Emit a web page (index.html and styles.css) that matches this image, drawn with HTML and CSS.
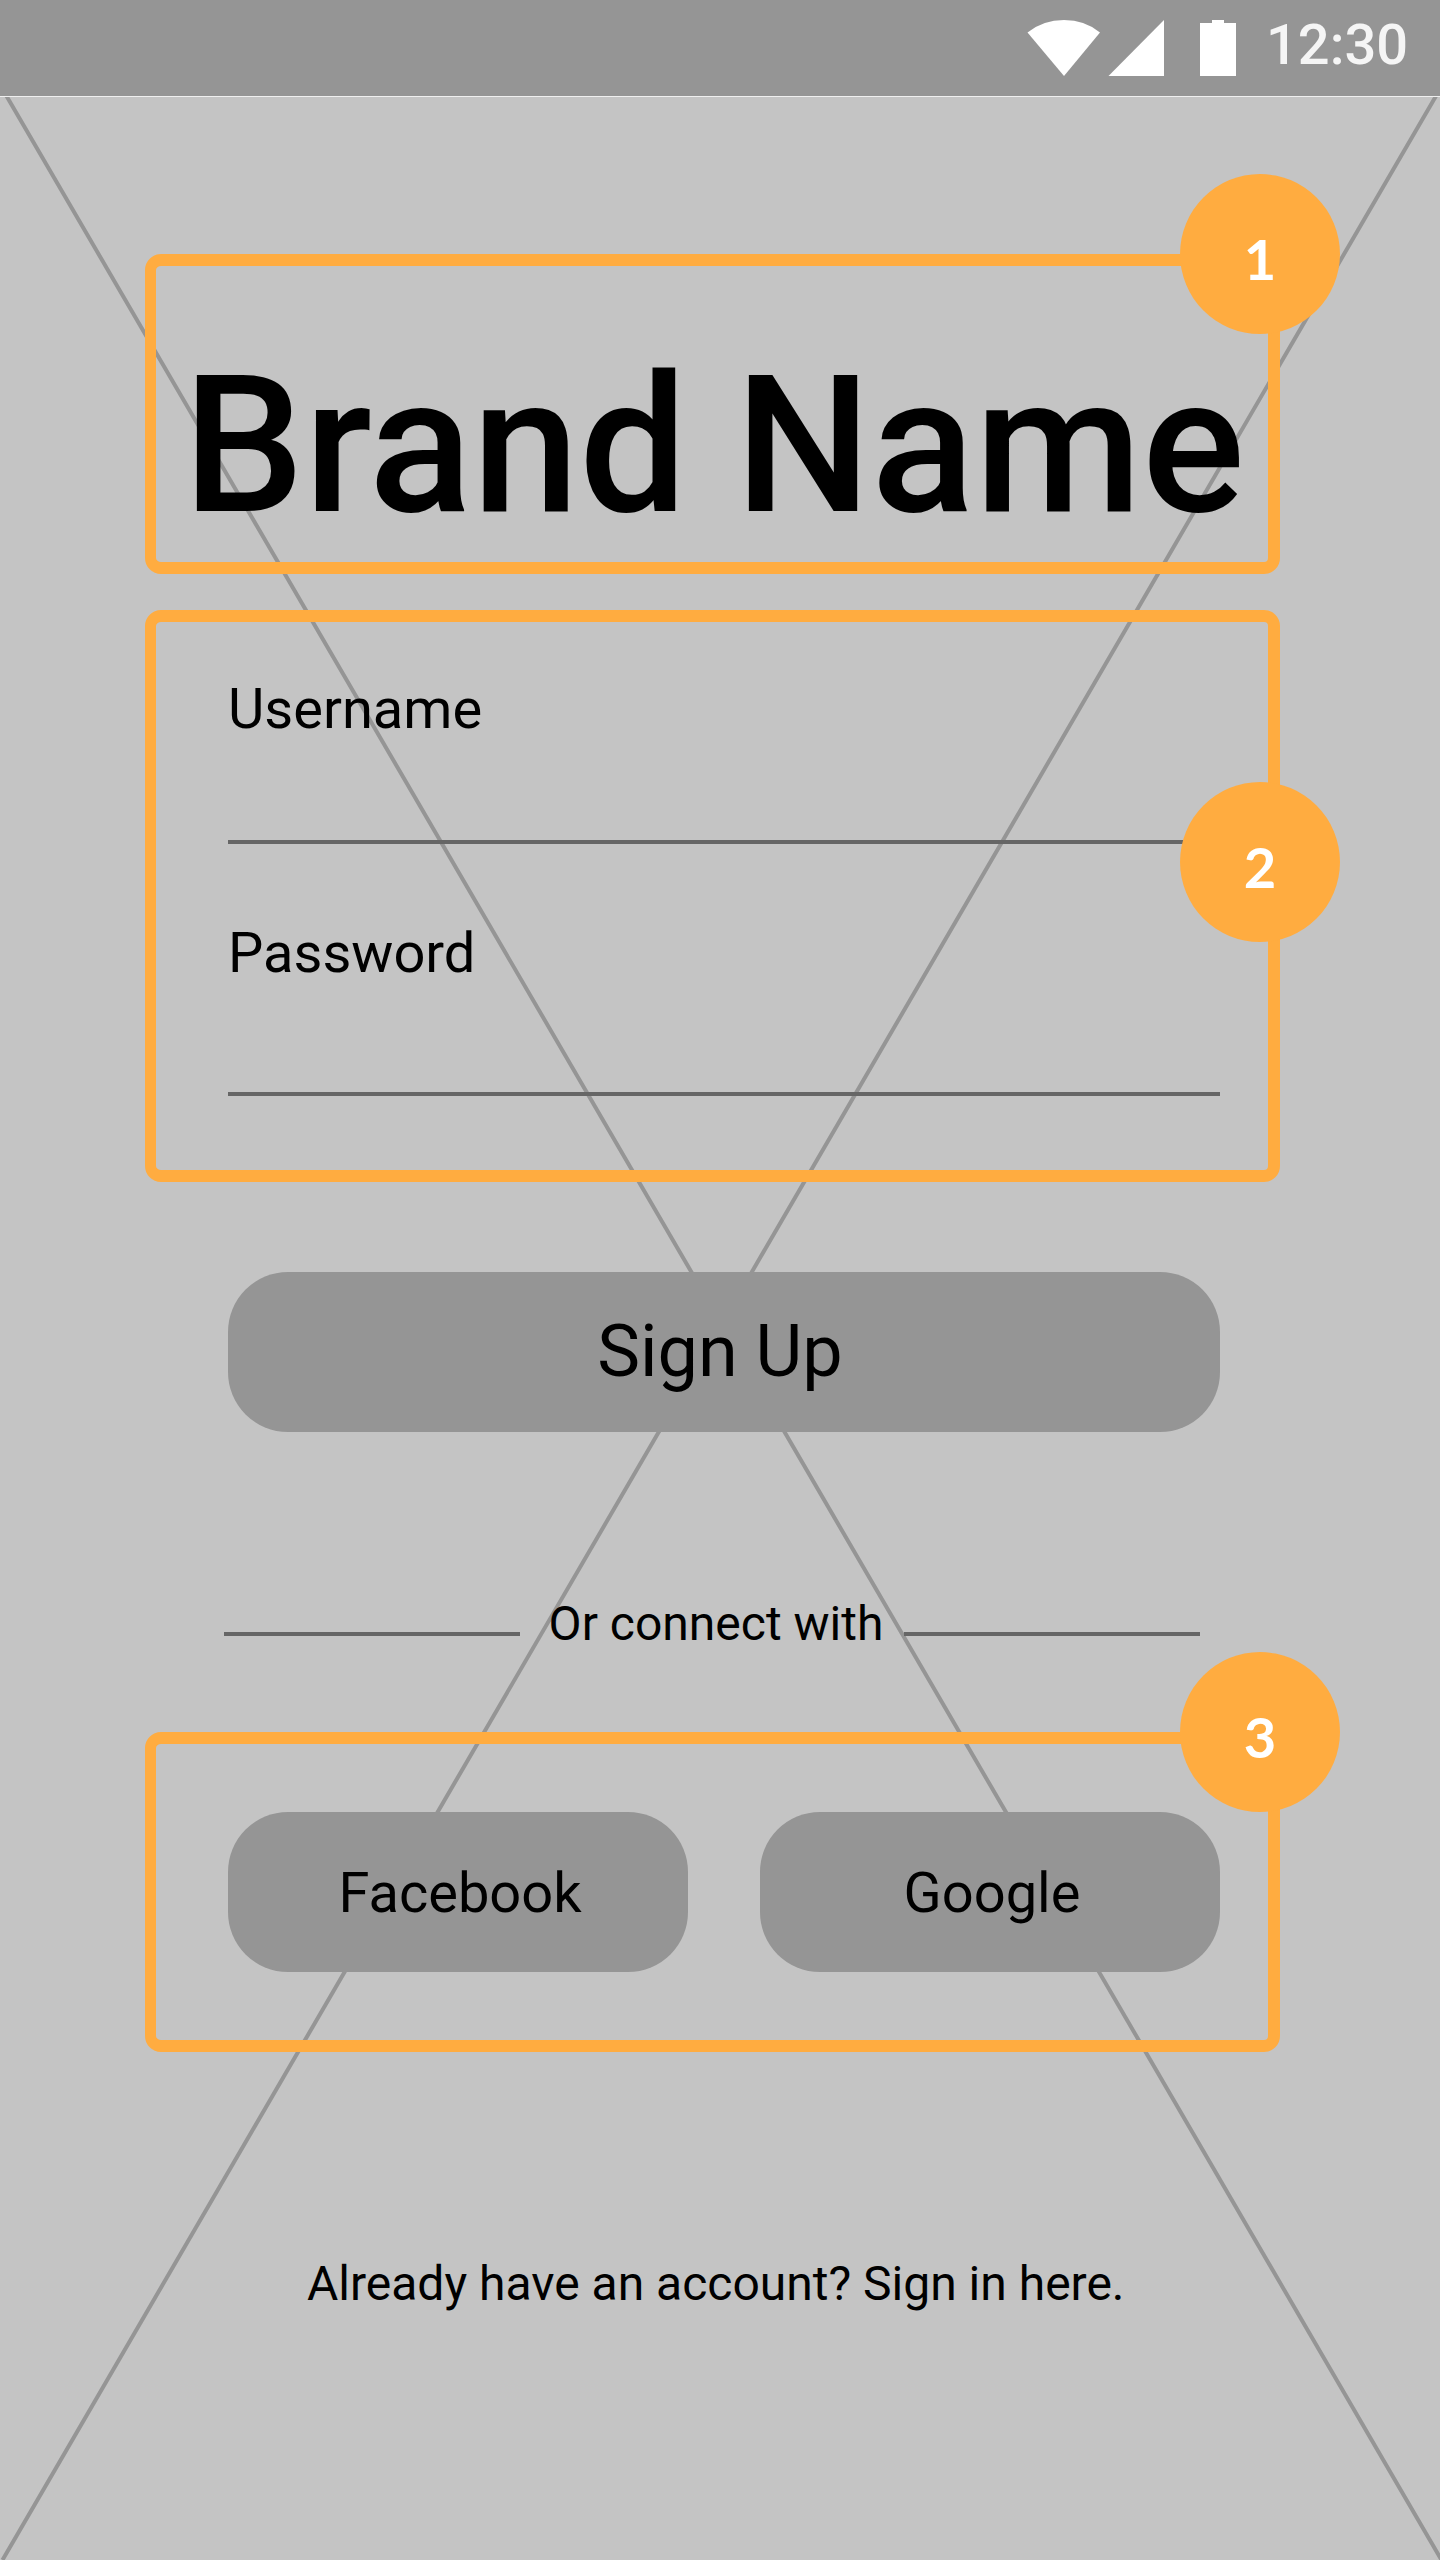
FILE: index.html
```html
<!DOCTYPE html>
<html lang="en">
<head>
<meta charset="utf-8">
<title>Sign Up</title>
<link rel="stylesheet" href="styles.css">
</head>
<body>
<div class="screen">
  <svg class="placeholder" viewBox="0 0 1440 2463" aria-hidden="true">
    <path d="M6.5 -1L1441.5 2463M1436 -1L2.5 2463"/>
  </svg>
  <header class="status">
    <svg class="status-icons" viewBox="0 0 210 56" aria-hidden="true">
      <path d="M0.500 12.5Q16 0 37 0T73 12.5L37 56z"/>
      <path d="M81.5 56L137 0V56z"/>
      <path d="M173 3H185V0H197V3H209V56H173z"/>
    </svg>
    <span class="time">12:30</span>
  </header>
  <main class="content">
    <section class="frame frame-brand">
      <h1 class="brand">Brand Name</h1>
      <span class="badge badge-corner">1</span>
    </section>
    <section class="frame frame-form">
      <div class="field">Username</div>
      <div class="field field-password">Password</div>
      <span class="badge badge-side">2</span>
    </section>
    <button class="button button-primary">Sign Up</button>
    <div class="divider">
      <span class="rule"></span>
      <span class="divider-text">Or connect with</span>
      <span class="rule"></span>
    </div>
    <section class="frame frame-social">
      <button class="button button-provider">Facebook</button>
      <button class="button button-provider">Google</button>
      <span class="badge badge-corner">3</span>
    </section>
    <p class="signin">Already have an account? Sign in here.</p>
  </main>
</div>
</body>
</html>
```
FILE: styles.css
```css
* {
  box-sizing: border-box;
}

body {
  margin: 0;
  font-family: Roboto, sans-serif;
  color: #000;
}

.screen {
  position: relative;
  display: flex;
  flex-direction: column;
  width: 1440px;
  height: 2560px;
  overflow: hidden;
  background: #c4c4c4;
}

.placeholder {
  position: absolute;
  left: 0;
  top: 97px;
  width: 1440px;
  height: 2463px;
}

.placeholder path {
  fill: none;
  stroke: #959595;
  stroke-width: 4;
}

.status {
  position: relative;
  display: flex;
  height: 97px;
  padding: 20px 32px 0 0;
  justify-content: flex-end;
  background: #959595;
  border-bottom: 1px solid #efefef;
}

.status-icons {
  width: 210px;
  height: 56px;
  fill: #fff;
  overflow: visible;
}

.time {
  width: 142px;
  margin-left: 29px;
  font-size: 56px;
  font-weight: 500;
  line-height: 50px;
  color: #f5f5f5;
}

.content {
  position: relative;
  display: flex;
  flex-direction: column;
  padding: 157px 160px 0 144px;
}

.frame {
  position: relative;
  margin-left: 1px;
  border: 12px solid #ffac40;
  border-left-width: 11px;
  border-radius: 16px;
}

.frame-brand {
  height: 320px;
  padding: 84px 0 0 27px;
}

.brand {
  margin: 0;
  font-size: 192px;
  font-weight: 500;
  line-height: 192px;
  white-space: nowrap;
}

.frame-form {
  height: 572px;
  margin-top: 36px;
  padding: 55px 48px 0 72px;
}

.field {
  height: 167px;
  border-bottom: 4px solid #666;
  font-size: 56px;
  line-height: 64px;
}

.field-password {
  height: 175px;
  margin-top: 77px;
}

.button {
  height: 160px;
  padding: 0;
  border: 0;
  border-radius: 60px;
  background: #959595;
  font-family: inherit;
  font-size: 56px;
  color: #000;
}

.button-primary {
  margin: 90px 60px 0 84px;
  padding: 0 8px 2px 0;
  font-size: 72px;
}

.divider {
  display: flex;
  width: 976px;
  margin: 163px 0 0 80px;
  justify-content: space-between;
}

.rule {
  width: 296px;
  height: 4px;
  margin-top: 37px;
  background: #666;
}

.divider-text {
  padding: 1px 0 0 8px;
  font-size: 48px;
  line-height: 56px;
}

.frame-social {
  display: grid;
  grid-template-columns: 1fr 1fr;
  gap: 72px;
  height: 320px;
  margin-top: 80px;
  padding: 68px 48px 0 72px;
}

.button-provider {
  padding: 1px 0 0 4px;
}

.signin {
  margin: 204px 0 0 163px;
  font-size: 48px;
  line-height: 56px;
  white-space: nowrap;
}

.badge {
  position: absolute;
  right: -72px;
  width: 160px;
  height: 160px;
  padding-top: 5px;
  border-radius: 50%;
  background: #ffac40;
  font-family: Lato, sans-serif;
  font-size: 56px;
  font-weight: 700;
  line-height: 160px;
  text-align: center;
  color: #fff;
}

.badge-corner {
  top: -92px;
}

.badge-side {
  top: 160px;
}
```
